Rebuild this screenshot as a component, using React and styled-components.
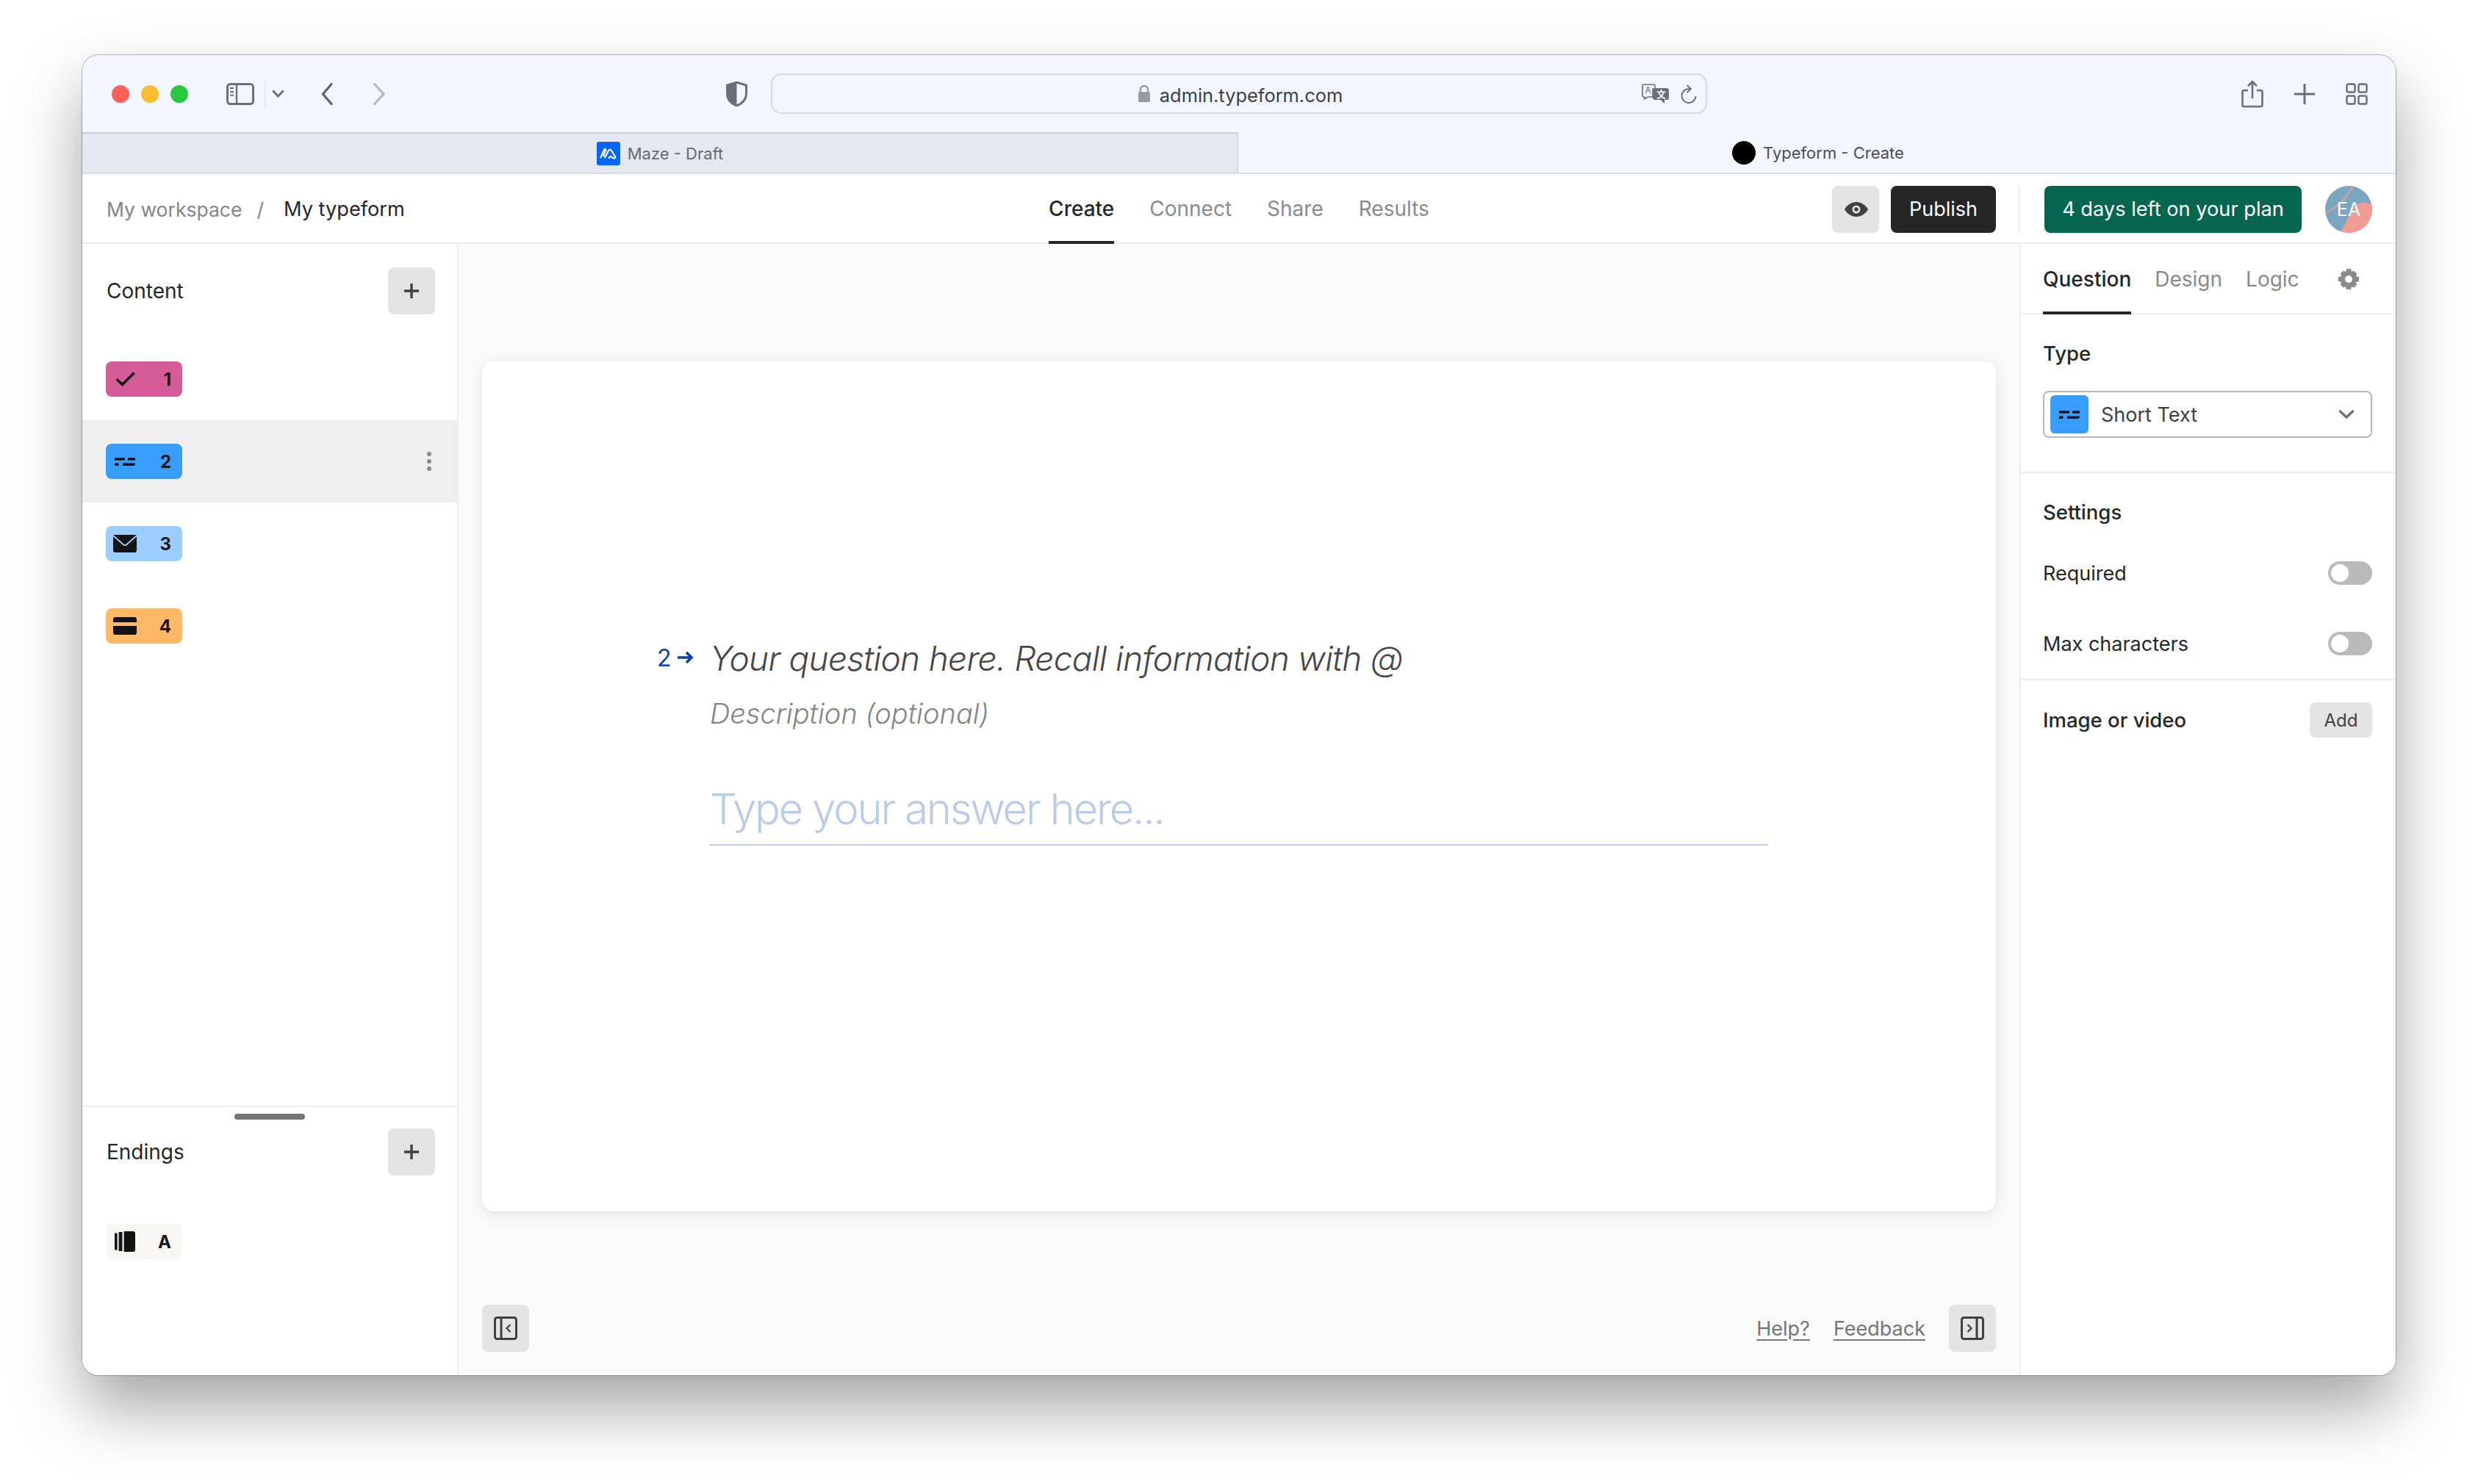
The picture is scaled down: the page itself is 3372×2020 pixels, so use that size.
import React from "react";
import styled, { createGlobalStyle } from "styled-components";

const Global = createGlobalStyle`
  html, body {
    margin: 0;
    background: #fff;
    font-family: "Inter", "Liberation Sans", sans-serif;
    -webkit-font-smoothing: antialiased;
  }
  * { box-sizing: border-box; }
`;

const Page = styled.div`
  width: 3372px;
  height: 2020px;
  padding: 75px 112px 0;
  overflow: hidden;
`;
const Win = styled.div`
  width: 3148px;
  height: 1797px;
  border-radius: 22px;
  overflow: hidden;
  display: flex;
  flex-direction: column;
  background: #fff;
  box-shadow: 0 0 0 1px rgba(0, 0, 0, 0.28), 0 44px 90px rgba(0, 0, 0, 0.36);
`;

/* browser chrome */
const Toolbar = styled.div`
  height: 105px;
  flex: none;
  background: #f3f6fe;
  display: grid;
  grid-template-columns: 937px 1274px 1fr;
  align-items: center;
`;
const ToolLeft = styled.div`
  display: flex;
  align-items: center;
  padding-left: 40px;
  padding-right: 32px;
  height: 100%;
`;
const Light = styled.span`
  width: 24px;
  height: 24px;
  border-radius: 50%;
  background: ${(p) => p.$c};
  margin-right: 16px;
  flex: none;
`;
const Address = styled.div`
  height: 55px;
  padding: 3px 0 0 4px;
  border: 2px solid #d7d9df;
  border-radius: 14px;
  display: flex;
  align-items: center;
  justify-content: center;
  position: relative;
  font-size: 25.4px;
  color: #3d3f44;
  gap: 13px;
`;
const AddressTools = styled.div`
  position: absolute;
  right: 12px;
  top: 12px;
  display: flex;
  align-items: center;
  gap: 16px;
`;
const ToolRight = styled.div`
  display: flex;
  justify-content: flex-end;
  align-items: center;
  padding-right: 38px;
  gap: 42px;
`;
const Tabs = styled.div`
  height: 57px;
  flex: none;
  display: flex;
  background: #f3f6fe;
  border-bottom: 2px solid #dcdde3;
`;
const BrowserTab = styled.div`
  flex: ${(p) => (p.$active ? 1 : "none")};
  width: ${(p) => (p.$active ? "auto" : "1573px")};
  background: ${(p) => (p.$active ? "#f3f6fe" : "#e5e8f0")};
  border-top: ${(p) => (p.$active ? "none" : "2px solid #cdd0d8")};
  border-right: ${(p) => (p.$active ? "none" : "1px solid #cdd0d8")};
  display: flex;
  align-items: center;
  justify-content: center;
  gap: 10px;
  padding-left: ${(p) => (p.$active ? "3px" : "0")};
  font-size: 22px;
  color: ${(p) => (p.$active ? "#4b4e55" : "#666a72")};
`;
const Favicon = styled.span`
  width: 32px;
  height: 32px;
  flex: none;
  display: flex;
  align-items: center;
  justify-content: center;
  border-radius: ${(p) => (p.$round ? "50%" : "3px")};
  background: ${(p) => (p.$round ? "#000" : "#0566ff")};
`;

/* app header */
const Header = styled.div`
  height: 95px;
  flex: none;
  display: grid;
  grid-template-columns: 1fr auto 1fr;
  align-items: center;
  background: #fff;
  box-shadow: inset 0 -2px 0 #eeeeee;
  font-size: 28px;
`;
const Crumbs = styled.div`
  display: flex;
  align-items: center;
  padding-left: 33px;
  font-size: 26.5px;
  color: #858585;
`;
const Slash = styled.span`
  margin: 0 27px 0 20px;
`;
const CrumbNow = styled.span`
  font-size: 27.2px;
  color: #262626;
`;
const Nav = styled.div`
  display: flex;
  gap: 48px;
  height: 100%;
`;
const NavTab = styled.div`
  height: 100%;
  display: flex;
  align-items: center;
  padding-top: 3px;
  border-bottom: 4px solid ${(p) => (p.$active ? "#262626" : "transparent")};
  color: ${(p) => (p.$active ? "#262626" : "#8a8a8a")};
  font-weight: ${(p) => (p.$active ? 500 : 400)};
`;
const HeadRight = styled.div`
  display: flex;
  align-items: center;
  justify-content: flex-end;
  padding-right: 32px;
  height: 64px;
`;
const IconBtn = styled.button`
  width: 64px;
  height: 64px;
  border: 0;
  padding: 0;
  flex: none;
  border-radius: 8px;
  background: #e3e3e3;
  display: flex;
  align-items: center;
  justify-content: center;
`;
const Publish = styled.button`
  height: 64px;
  width: 143px;
  margin-left: 16px;
  padding: 0;
  border: 0;
  border-radius: 8px;
  background: #262626;
  color: #fff;
  font: 400 27px "Inter", sans-serif;
`;
const VDivider = styled.span`
  width: 2px;
  height: 64px;
  background: #eeeeee;
  margin: 0 33px 0 31px;
`;
const Plan = styled.button`
  height: 64px;
  width: 350px;
  padding: 0;
  border: 0;
  border-radius: 8px;
  background: #05664f;
  color: #fff;
  font: 400 27.2px "Inter", sans-serif;
`;
const Avatar = styled.div`
  width: 64px;
  height: 64px;
  margin-left: 32px;
  border-radius: 50%;
  overflow: hidden;
  position: relative;
  display: flex;
  align-items: center;
  justify-content: center;
  color: #fff;
  font-size: 25px;
  span { position: relative; }
  svg { position: absolute; inset: 0; }
`;

/* main grid */
const Main = styled.div`
  flex: 1;
  min-height: 0;
  display: grid;
  grid-template-columns: 512px 1fr 512px;
`;
const Side = styled.aside`
  display: flex;
  flex-direction: column;
  background: #fff;
  border-right: 2px solid #eeeeee;
`;
const SideHead = styled.div`
  display: flex;
  align-items: center;
  justify-content: space-between;
  padding: 32px 30px 32px 33px;
  font-size: 28px;
  color: #262626;
`;
const List = styled.div`
  flex: 1;
`;
const Row = styled.div`
  height: 112px;
  display: flex;
  align-items: center;
  justify-content: space-between;
  padding: 0 32px;
  background: ${(p) => (p.$active ? "#efefef" : "transparent")};
`;
const Badge = styled.div`
  width: 104px;
  height: 48px;
  border-radius: 8px;
  background: ${(p) => p.$c};
  display: flex;
  align-items: center;
  justify-content: space-between;
  padding: 0 15px 0 10px;
  font-size: 24px;
  font-weight: 700;
  color: #141414;
`;
const BadgeIcon = styled.span`
  width: 32px;
  display: flex;
  justify-content: center;
`;
const Dots = styled.div`
  display: flex;
  flex-direction: column;
  gap: 4px;
  margin-right: 3px;
  span {
    width: 6px;
    height: 6px;
    border-radius: 50%;
    background: #8a8a8a;
  }
`;
const Endings = styled.div`
  border-top: 2px solid #eeeeee;
  padding-bottom: 126px;
`;
const Grip = styled.div`
  width: 96px;
  height: 8px;
  border-radius: 4px;
  background: #757575;
  margin: 9px auto 0;
`;
const EndHead = styled(SideHead)`
  padding-top: 12px;
  padding-bottom: 34px;
`;

/* center */
const Center = styled.div`
  display: flex;
  flex-direction: column;
  background: #fafafa;
  padding: 160px 32px 32px;
`;
const Card = styled.div`
  flex: 1;
  background: #fff;
  border-radius: 16px;
  box-shadow: 0 4px 24px rgba(0, 0, 0, 0.08), 0 2px 4px rgba(0, 0, 0, 0.04);
  padding-top: 370px;
`;
const Block = styled.div`
  width: 1440px;
  margin: 0 auto;
`;
const QRow = styled.div`
  display: flex;
  align-items: center;
  margin-left: -72px;
`;
const QNum = styled.div`
  width: 72px;
  display: flex;
  align-items: center;
  gap: 8px;
  font-size: 32px;
  color: #0445af;
  padding-bottom: 2px;
`;
const Question = styled.div`
  font-size: 46px;
  letter-spacing: -0.7px;
  line-height: 68px;
  font-style: italic;
  font-weight: 300;
  color: #474747;
`;
const Desc = styled.div`
  margin-top: 13px;
  font-size: 38px;
  line-height: 56px;
  font-style: italic;
  font-weight: 300;
  color: #858585;
`;
const Answer = styled.div`
  margin-top: 63px;
  padding-bottom: 9px;
  font-size: 58px;
  letter-spacing: -2.2px;
  line-height: 78px;
  font-weight: 300;
  color: #b9cbe9;
  border-bottom: 2px solid #b9cbe9;
`;
const Foot = styled.div`
  margin-top: 127px;
  flex: none;
  display: flex;
  align-items: center;
  justify-content: space-between;
`;
const FootRight = styled.div`
  display: flex;
  align-items: center;
  gap: 32px;
`;
const FootLink = styled.a`
  font-size: 27px;
  color: #757575;
  text-decoration: underline;
  text-underline-offset: 5px;
`;

/* right panel */
const Panel = styled.aside`
  background: #fff;
  border-left: 2px solid #eeeeee;
  font-size: 27px;
  color: #262626;
`;
const PanelTabs = styled.div`
  height: 96px;
  display: flex;
  align-items: stretch;
  gap: 32px;
  padding: 0 32px 0 30px;
  font-size: 28px;
  box-shadow: inset 0 -2px 0 #eeeeee;
`;
const PanelTab = styled.div`
  display: flex;
  align-items: center;
  padding-top: 4px;
  border-bottom: 4px solid ${(p) => (p.$active ? "#262626" : "transparent")};
  color: ${(p) => (p.$active ? "#262626" : "#8a8a8a")};
  font-weight: ${(p) => (p.$active ? 500 : 400)};
`;
const Gear = styled.div`
  margin-left: 21px;
  display: flex;
  align-items: center;
`;
const Section = styled.div`
  padding: ${(p) => p.$pad};
  border-bottom: ${(p) => (p.$last ? "none" : "2px solid #eeeeee")};
`;
const Label = styled.div`
  font-size: 27.5px;
  font-weight: 500;
  line-height: 34px;
`;
const Select = styled.div`
  margin-top: 34px;
  height: 64px;
  border: 2px solid #b5b5b5;
  border-radius: 8px;
  display: flex;
  align-items: center;
  padding: 0 22px 0 8px;
  color: #404040;
`;
const TypeIcon = styled.span`
  width: 52px;
  height: 52px;
  border-radius: 6px;
  background: #379dff;
  display: flex;
  align-items: center;
  justify-content: center;
  margin-right: 17px;
`;
const Grow = styled.span`
  flex: 1;
`;
const SettingList = styled.div`
  margin-top: 18px;
`;
const SettingRow = styled.div`
  display: flex;
  align-items: center;
  justify-content: space-between;
  height: ${(p) => p.$h};
`;
const Toggle = styled.span`
  width: 60px;
  height: 32px;
  border-radius: 16px;
  background: #bababa;
  padding: 4px;
  display: flex;
  &::before {
    content: "";
    width: 24px;
    height: 24px;
    border-radius: 50%;
    background: #fff;
  }
`;
const AddBtn = styled.button`
  width: 85px;
  height: 48px;
  padding: 0;
  border: 0;
  border-radius: 8px;
  background: #e3e3e3;
  color: #404040;
  font: 400 24px "Inter", sans-serif;
`;

/* icons */
const ShortTextIcon = () => (
  <svg width="28" height="11" viewBox="0 0 28 11" fill="#141414">
    <rect x="0" y="0" width="14" height="3.6" />
    <rect x="18" y="0" width="10" height="3.6" />
    <rect x="0" y="7.4" width="5.5" height="3.6" />
    <path d="M11 7.400h17c0 2.200-1 3.600-3 3.600H11z" />
  </svg>
);
const PlusIcon = () => (
  <svg width="20" height="20" viewBox="0 0 20 20" fill="none" stroke="#404040" strokeWidth="3.4">
    <path d="M10 0v20M0 10h20" />
  </svg>
);
const PaneIcon = ({ flip }) => (
  <svg width="32" height="32" viewBox="0 0 32 32" fill="none" stroke="#404040" strokeWidth="3">
    <rect x="1.5" y="1.5" width="29" height="29" rx="3" />
    {flip ? (
      <>
        <path d="M22 1.500v29" />
        <path d="M9.500 11l5 5-5 5" strokeWidth="2.200" />
      </>
    ) : (
      <>
        <path d="M10 1.500v29" />
        <path d="M22.500 11l-5 5 5 5" strokeWidth="2.200" />
      </>
    )}
  </svg>
);

const ICON = "#6b6e76";

export default function App() {
  return (
    <Page>
      <Global />
      <Win>
        <Toolbar>
          <ToolLeft>
            <Light $c="#ff5f57" />
            <Light $c="#febc2e" />
            <Light $c="#28c840" />
            <svg width="38" height="30" viewBox="0 0 38 30" fill="none" style={{ marginLeft: 36 }}>
              <rect x="1.5" y="1.5" width="35" height="27" rx="4" stroke={ICON} strokeWidth="3" />
              <path d="M14 2v26" stroke={ICON} strokeWidth="2.400" />
              <path d="M5 7h5M5 12h5M5 16.500h5" stroke={ICON} strokeWidth="1.800" />
            </svg>
            <svg width="28" height="38" viewBox="0 0 28 38" fill="none" style={{ marginLeft: 14 }}>
              <path d="M0.500 0v38" stroke="#dfe2ea" strokeWidth="1.500" />
              <path d="M12 15l6.500 7 6.500-7" stroke={ICON} strokeWidth="2.800" strokeLinecap="round" />
            </svg>
            <svg width="16" height="30" viewBox="0 0 16 30" fill="none" style={{ marginLeft: 49 }}>
              <path d="M14 1.500L2.500 15 14 28.500" stroke="#5f626a" strokeWidth="3.200" strokeLinecap="round" />
            </svg>
            <svg width="18" height="30" viewBox="0 0 18 30" fill="none" style={{ marginLeft: 54 }}>
              <path d="M2.500 1.500L15 15 2.500 28.500" stroke="#b4b7bf" strokeWidth="3.200" strokeLinecap="round" />
            </svg>
            <svg width="29" height="34" viewBox="0 0 29 34" style={{ marginLeft: "auto" }}>
              <path d="M14.500 1L27.500 5v12c0 8-6 13-13 16C7.500 30 1.500 25 1.500 17V5z" fill="none" stroke={ICON} strokeWidth="3" />
              <path d="M14.500 1L1.500 5v12c0 8 6 13 13 16z" fill={ICON} />
            </svg>
          </ToolLeft>
          <Address>
            <svg width="16" height="23" viewBox="0 0 16 23" fill="#9a9ba0" style={{ marginTop: -4 }}>
              <rect x="0" y="9" width="16" height="14" rx="2" />
              <path d="M3 10V6a5 5 0 0 1 10 0v4" fill="none" stroke="#9a9ba0" strokeWidth="2.400" />
            </svg>
            <span>admin.typeform.com</span>
            <AddressTools>
              <svg width="37" height="27" viewBox="0 0 37 27">
                <path d="M3 1h13a2 2 0 0 1 2 2v4h-3v11H8l-4 3v-3H3a2 2 0 0 1-2-2V3a2 2 0 0 1 2-2z" fill="none" stroke={ICON} strokeWidth="1.600" />
                <text x="4.500" y="13" fontSize="12" fontFamily="Inter, sans-serif" fill={ICON}>A</text>
                <path d="M18 6h16a3 3 0 0 1 3 3v10a3 3 0 0 1-3 3h-3v5l-5-5h-8a3 3 0 0 1-3-3V9a3 3 0 0 1 3-3z" fill={ICON} />
                <text x="20" y="19" fontSize="13" fontFamily="'Noto Sans CJK SC', sans-serif" fontWeight="700" fill="#f3f6fe">文</text>
              </svg>
              <svg width="22" height="26" viewBox="0 0 22 26" fill="none">
                <path d="M13 6.200A9.500 9.500 0 1 0 20.500 16" stroke={ICON} strokeWidth="1.900" />
                <path d="M8.500 1l5.500 5-5.500 5" stroke={ICON} strokeWidth="1.900" />
              </svg>
            </AddressTools>
          </Address>
          <ToolRight>
            <svg width="30" height="38" viewBox="0 0 30 38" fill="none" stroke={ICON} strokeWidth="2.600">
              <path d="M9 14H3.500a2 2 0 0 0-2 2v18a2 2 0 0 0 2 2h23a2 2 0 0 0 2-2V16a2 2 0 0 0-2-2H21" />
              <path d="M15 25V2M9 8l6-6 6 6" />
            </svg>
            <svg width="28" height="28" viewBox="0 0 28 28" fill="none" stroke={ICON} strokeWidth="3">
              <path d="M14 0v28M0 14h28" />
            </svg>
            <svg width="30" height="30" viewBox="0 0 30 30" fill="none" stroke={ICON} strokeWidth="2.400">
              <rect x="1.500" y="1.500" width="11" height="11" rx="2" />
              <rect x="17.500" y="1.500" width="11" height="11" rx="2" />
              <rect x="1.500" y="17.500" width="11" height="11" rx="2" />
              <rect x="17.500" y="17.500" width="11" height="11" rx="2" />
            </svg>
          </ToolRight>
        </Toolbar>
        <Tabs>
          <BrowserTab>
            <Favicon>
              <svg width="24" height="16" viewBox="0 0 24 16" fill="none" stroke="#fff" strokeWidth="2.200">
                <path d="M1 14L6 3c1-2 3-1 2 1L5 12M12 4l-5 10M12 4c1-2 3-2 4 0l5 8c1 2-1 3-3 2l-3-2-3 2" />
              </svg>
            </Favicon>
            Maze - Draft
          </BrowserTab>
          <BrowserTab $active>
            <Favicon $round />
            Typeform - Create
          </BrowserTab>
        </Tabs>
        <Header>
          <Crumbs>
            My workspace
            <Slash>/</Slash>
            <CrumbNow>My typeform</CrumbNow>
          </Crumbs>
          <Nav>
            <NavTab $active>Create</NavTab>
            <NavTab>Connect</NavTab>
            <NavTab>Share</NavTab>
            <NavTab>Results</NavTab>
          </Nav>
          <HeadRight>
            <IconBtn>
              <svg width="32" height="20" viewBox="0 0 32 20" style={{ marginLeft: 2 }}>
                <path fillRule="evenodd" d="M16 0C9 0 3 4.500 0 10c3 5.500 9 10 16 10s13-4.500 16-10C29 4.500 23 0 16 0zm0 15.500a5.500 5.500 0 1 1 0-11 5.500 5.500 0 0 1 0 11z" fill="#404040" />
                <circle cx="16" cy="10" r="2.800" fill="#404040" />
              </svg>
            </IconBtn>
            <Publish>Publish</Publish>
            <VDivider />
            <Plan>4 days left on your plan</Plan>
            <Avatar>
              <svg width="64" height="64" viewBox="0 0 64 64">
                <rect width="64" height="64" fill="#7aa6c2" />
                <path d="M19 64C28 55 30 42 38 30C44 22 56 20 64 26V64z" fill="#f09c94" />
                <path d="M0 38C14 30 26 20 32 10c2-4 5-8 8-10" fill="none" stroke="#f09c94" strokeWidth="1.500" />
              </svg>
              <span>EA</span>
            </Avatar>
          </HeadRight>
        </Header>
        <Main>
          <Side>
            <SideHead>
              Content
              <IconBtn><PlusIcon /></IconBtn>
            </SideHead>
            <List>
              <Row>
                <Badge $c="#d65c99">
                  <BadgeIcon>
                    <svg width="27" height="20" viewBox="0 0 27 20" fill="none">
                      <path d="M1.500 10l8 7.500L25.500 1.500" stroke="#141414" strokeWidth="3.600" />
                    </svg>
                  </BadgeIcon>
                  1
                </Badge>
              </Row>
              <Row $active>
                <Badge $c="#379dff">
                  <BadgeIcon><ShortTextIcon /></BadgeIcon>
                  2
                </Badge>
                <Dots><span /><span /><span /></Dots>
              </Row>
              <Row>
                <Badge $c="#9ccfff">
                  <BadgeIcon>
                    <svg width="32" height="24" viewBox="0 0 32 24">
                      <path d="M0 0h32v21a3 3 0 0 1-3 3H3a3 3 0 0 1-3-3z" fill="#141414" />
                      <path d="M0 1l13.500 12a4 4 0 0 0 5 0L32 1" fill="none" stroke="#9ccfff" strokeWidth="1.800" />
                    </svg>
                  </BadgeIcon>
                  3
                </Badge>
              </Row>
              <Row>
                <Badge $c="#ffb966">
                  <BadgeIcon>
                    <svg width="32" height="24" viewBox="0 0 32 24" fill="#141414">
                      <path d="M3 0h26a3 3 0 0 1 3 3v4H0V3a3 3 0 0 1 3-3z" />
                      <path d="M0 12h32v9a3 3 0 0 1-3 3H3a3 3 0 0 1-3-3z" />
                    </svg>
                  </BadgeIcon>
                  4
                </Badge>
              </Row>
            </List>
            <Endings>
              <Grip />
              <EndHead>
                Endings
                <IconBtn><PlusIcon /></IconBtn>
              </EndHead>
              <Row>
                <Badge $c="#f7f6f3">
                  <BadgeIcon>
                    <svg width="28" height="28" viewBox="0 0 28 28" fill="#141414">
                      <rect x="0" y="2.500" width="3.600" height="23" />
                      <rect x="5.600" y="1" width="4.800" height="26" />
                      <path d="M12.600 0H25a3 3 0 0 1 3 3v22a3 3 0 0 1-3 3H12.600z" />
                    </svg>
                  </BadgeIcon>
                  A
                </Badge>
              </Row>
            </Endings>
          </Side>
          <Center>
            <Card>
              <Block>
                <QRow>
                  <QNum>
                    2
                    <svg width="22" height="18" viewBox="0 0 22 18" fill="none" stroke="#0445af" strokeWidth="3.600">
                      <path d="M0 9h19M12 2l7 7-7 7" />
                    </svg>
                  </QNum>
                  <Question>Your question here. Recall information with @</Question>
                </QRow>
                <Desc>Description (optional)</Desc>
                <Answer>Type your answer here...</Answer>
              </Block>
            </Card>
            <Foot>
              <IconBtn><PaneIcon /></IconBtn>
              <FootRight>
                <FootLink>Help?</FootLink>
                <FootLink>Feedback</FootLink>
                <IconBtn><PaneIcon flip /></IconBtn>
              </FootRight>
            </Foot>
          </Center>
          <Panel>
            <PanelTabs>
              <PanelTab $active>Question</PanelTab>
              <PanelTab>Design</PanelTab>
              <PanelTab>Logic</PanelTab>
              <Gear>
                <svg width="28" height="28" viewBox="0 0 28 28">
                  <path fillRule="evenodd" fill="#8a8a8a" d="M11 0h6l1 4 3-1.500 4.200 4.200L23.700 10l4.300 1v6l-4.300 1 1.500 3.300-4.200 4.200L18 24l-1 4h-6l-1-4-3 1.500-4.200-4.200L4.300 18 0 17v-6l4.300-1-1.500-3.300L7 2.500 10 4zM14 9a5 5 0 1 0 0 10 5 5 0 0 0 0-10z" />
                </svg>
              </Gear>
            </PanelTabs>
            <Section $pad="36px 32px 46px 30px">
              <Label>Type</Label>
              <Select>
                <TypeIcon><ShortTextIcon /></TypeIcon>
                Short Text
                <Grow />
                <svg width="22" height="14" viewBox="0 0 22 14" fill="none">
                  <path d="M1.500 2L11 11l9.500-9" stroke="#6e6e6e" strokeWidth="3.200" />
                </svg>
              </Select>
            </Section>
            <Section $pad="36px 32px 0 30px">
              <Label>Settings</Label>
              <SettingList>
                <SettingRow $h="96px">
                  Required
                  <Toggle />
                </SettingRow>
                <SettingRow $h="96px">
                  Max characters
                  <Toggle />
                </SettingRow>
              </SettingList>
            </Section>
            <Section $pad="30px 32px 30px 30px" $last>
              <SettingRow $h="48px">
                <Label>Image or video</Label>
                <AddBtn>Add</AddBtn>
              </SettingRow>
            </Section>
          </Panel>
        </Main>
      </Win>
    </Page>
  );
}
